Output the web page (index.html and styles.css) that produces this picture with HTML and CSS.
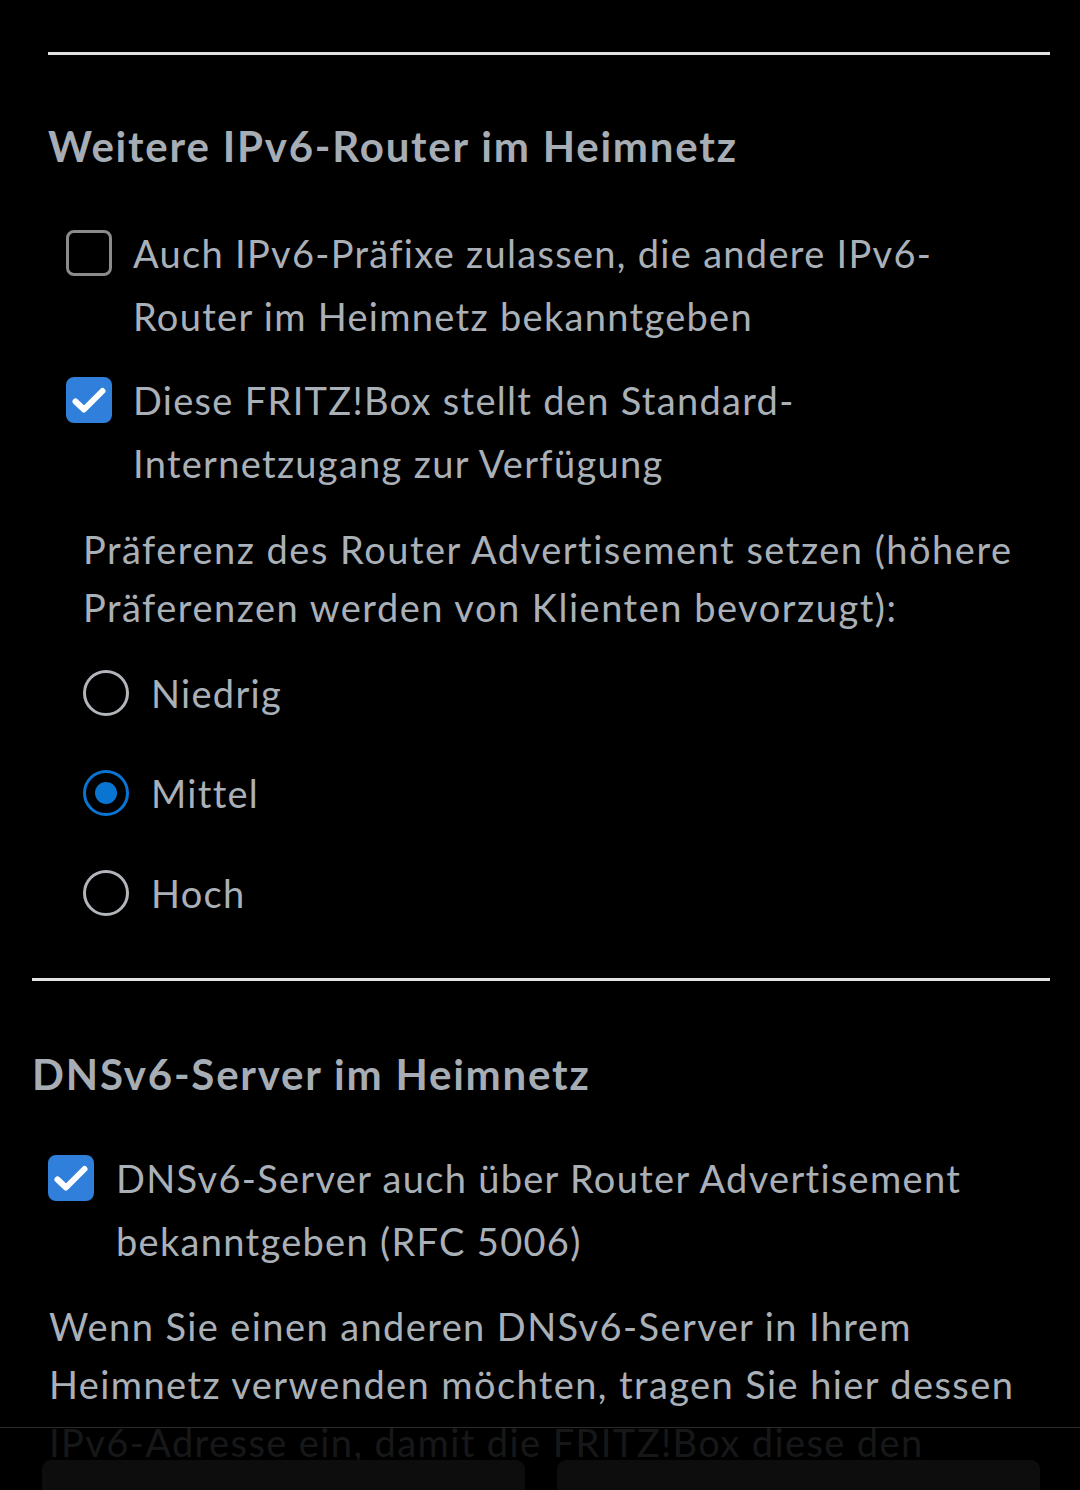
FILE: index.html
```html
<!DOCTYPE html>
<html lang="de">
<head>
<meta charset="utf-8">
<link rel="stylesheet" href="styles.css">
</head>
<body>
<main class="page">
  <section class="block block-inner">
    <hr class="rule">
    <h2 class="title">Weitere IPv6-Router im Heimnetz</h2>
    <div class="checks">
      <label class="check">
        <span class="box"></span>
        <span class="label">Auch IPv6-Präfixe zulassen, die andere IPv6-<br>Router im Heimnetz bekanntgeben</span>
      </label>
      <label class="check">
        <span class="box on"><svg viewBox="0 0 46 46" width="46" height="46"><path d="M9.5 24.5 L18 32.5 L36.5 14" fill="none" stroke="#fff" stroke-width="6" stroke-linecap="round" stroke-linejoin="round"/></svg></span>
        <span class="label">Diese FRITZ!Box stellt den Standard-<br>Internetzugang zur Verfügung</span>
      </label>
    </div>
    <div class="pref">
      <p class="pref-text">Präferenz des Router Advertisement setzen (höhere<br>Präferenzen werden von Klienten bevorzugt):</p>
      <div class="radios">
        <label class="radio"><span class="dot"></span><span class="rlabel">Niedrig</span></label>
        <label class="radio"><span class="dot on"></span><span class="rlabel">Mittel</span></label>
        <label class="radio"><span class="dot"></span><span class="rlabel">Hoch</span></label>
      </div>
    </div>
  </section>
  <section class="block block-outer">
    <hr class="rule">
    <h2 class="title">DNSv6-Server im Heimnetz</h2>
    <label class="check check-outer">
      <span class="box on"><svg viewBox="0 0 46 46" width="46" height="46"><path d="M9.5 24.5 L18 32.5 L36.5 14" fill="none" stroke="#fff" stroke-width="6" stroke-linecap="round" stroke-linejoin="round"/></svg></span>
      <span class="label">DNSv6-Server auch über Router Advertisement<br>bekanntgeben (RFC 5006)</span>
    </label>
    <p class="para">Wenn Sie einen anderen DNSv6-Server in Ihrem<br>Heimnetz verwenden möchten, tragen Sie hier dessen<br>IPv6-Adresse ein, damit die FRITZ!Box diese den</p>
  </section>
</main>
<footer class="actions">
  <button class="btn" type="button"></button>
  <button class="btn" type="button"></button>
</footer>
</body>
</html>
```
FILE: styles.css
```css
* { box-sizing: border-box; }
html, body { margin: 0; padding: 0; background: #000; }
body {
  font-family: Lato, "Open Sans", sans-serif;
  color: #aab0b8;
  width: 1080px;
  height: 1490px;
  overflow: hidden;
  letter-spacing: 1.3px;
}
.page {
  padding: 52px 30px 0 32px;
  display: flex;
  flex-direction: column;
}
.block-inner { padding-left: 16px; }
.rule {
  margin: 0;
  border: 0;
  height: 3px;
  background: #e3e3e3;
}
.title {
  margin: 66px 0 0;
  font-size: 42px;
  line-height: 50px;
  font-weight: 700;
  color: #a7adb5;
  letter-spacing: 1.8px;
}
.block-outer .title { margin-top: 68px; }
.checks {
  margin-top: 51px;
  display: flex;
  flex-direction: column;
  gap: 21px;
  padding-left: 18px;
}
.check {
  display: flex;
  align-items: flex-start;
  gap: 21px;
}
.box {
  flex: none;
  width: 46px;
  height: 46px;
  margin-top: 8px;
  border: 3px solid #8b8b8b;
  border-radius: 8px;
  position: relative;
}
.box.on {
  background: #2f7fdb;
  border-color: #2f7fdb;
}
.box svg {
  position: absolute;
  left: -3px;
  top: -3px;
}
.label {
  font-size: 38px;
  line-height: 63px;
}
.pref { padding-left: 35px; margin-top: 25px; }
.pref-text {
  margin: 0;
  font-size: 38px;
  line-height: 58px;
  letter-spacing: 1.5px;
}
.radios {
  display: flex;
  flex-direction: column;
  gap: 54px;
  margin-top: 34px;
}
.radio {
  display: flex;
  align-items: center;
  gap: 22px;
  height: 46px;
}
.dot {
  flex: none;
  width: 46px;
  height: 46px;
  border-radius: 50%;
  border: 3px solid #b2b6bb;
  display: flex;
  align-items: center;
  justify-content: center;
}
.dot.on { border-color: #0a74d2; }
.dot.on::after {
  content: "";
  width: 22px;
  height: 22px;
  border-radius: 50%;
  background: #0a74d2;
}
.rlabel { font-size: 38px; line-height: 46px; }
.block-outer { margin-top: 62px; }
.check-outer { margin-top: 48px; padding-left: 16px; gap: 22px; }
.para {
  margin: 24px 0 0 17px;
  font-size: 38px;
  line-height: 58px;
  letter-spacing: 1.4px;
}
.actions {
  position: fixed;
  left: 0;
  right: 0;
  bottom: 0;
  height: 63px;
  background: rgba(0, 0, 0, 0.87);
  border-top: 1px solid #2a2a2a;
  display: flex;
  gap: 32px;
  padding: 32px 40px 0 42px;
}
.btn {
  flex: 1;
  border: 0;
  background: #0d0d0d;
  border-radius: 9px 9px 0 0;
  height: 40px;
}
```
